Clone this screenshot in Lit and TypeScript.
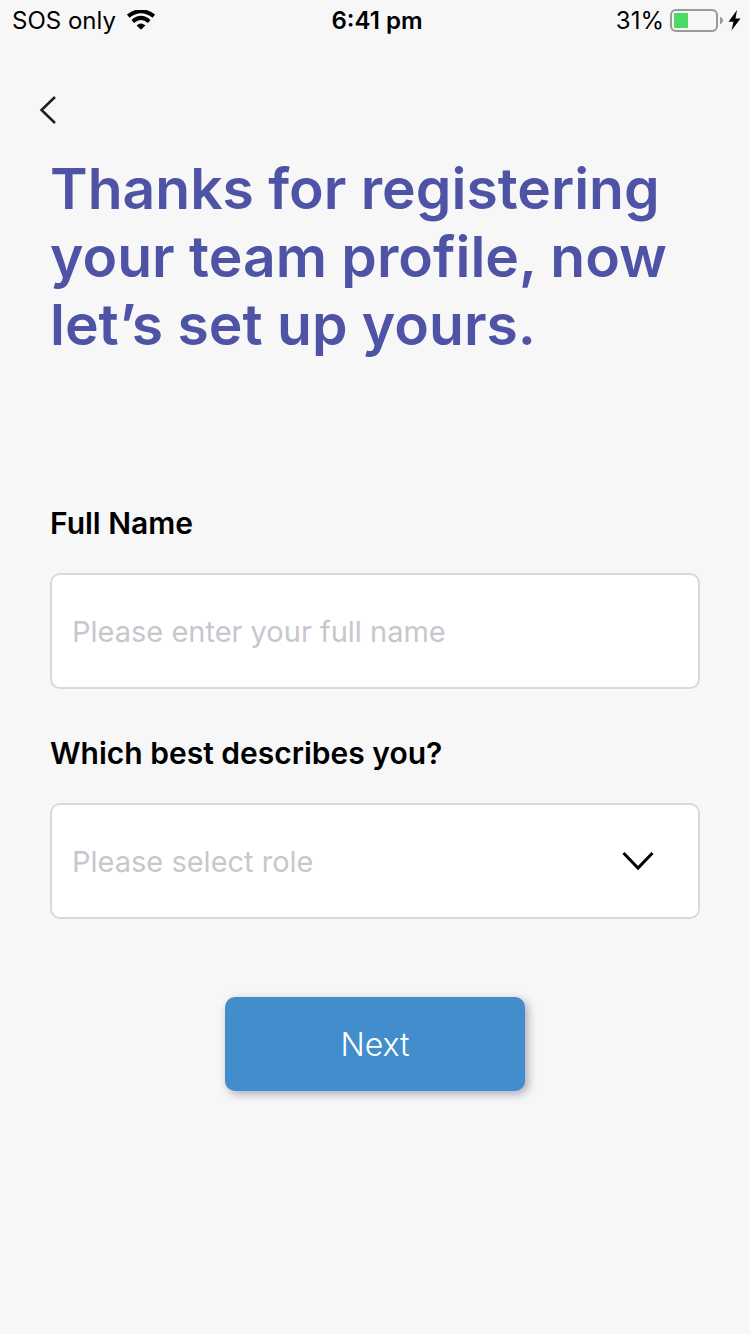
import { LitElement, html, css } from "lit";
import { customElement } from "lit/decorators.js";

@customElement("app-root")
export class AppRoot extends LitElement {
  static styles = css`
    :host {
      display: block;
      min-height: 100vh;
      background: #f7f7f7;
      color: #000;
      font-family: Inter, "Liberation Sans", sans-serif;
    }
    * {
      box-sizing: border-box;
    }
    .status {
      display: grid;
      grid-template-columns: 1fr auto 1fr;
      align-items: center;
      height: 42px;
      padding: 0 8px 0 12px;
      font-size: 24px;
      line-height: 42px;
    }
    .carrier,
    .power {
      display: flex;
      align-items: center;
    }
    .carrier {
      gap: 10px;
    }
    .power {
      justify-content: flex-end;
      gap: 6px;
    }
    .time {
      font-weight: 600;
    }
    svg {
      display: block;
    }
    .back {
      display: block;
      margin: 46px 0 0 32px;
      padding: 6px;
      border: 0;
      background: none;
    }
    main {
      padding: 23px 50px 0;
    }
    h1 {
      margin: 0;
      color: #4e53a6;
      font-size: 57px;
      font-weight: 600;
      line-height: 68px;
    }
    form {
      display: flex;
      flex-direction: column;
      margin-top: 144px;
    }
    label {
      font-size: 30px;
      font-weight: 600;
      line-height: 40px;
    }
    .box {
      display: grid;
      align-items: center;
      height: 116px;
      margin: 30px 0 44px;
      border: 2px solid #d9d9d9;
      border-radius: 10px;
      background: #fff;
    }
    .control {
      grid-area: 1 / 1;
      width: 100%;
      height: 100%;
      padding: 0 20px;
      border: 0;
      background: none;
      color: #c7c7cd;
      font: inherit;
      font-size: 29px;
      appearance: none;
    }
    .control::placeholder {
      color: #c7c7cd;
      opacity: 1;
    }
    .chevron {
      grid-area: 1 / 1;
      justify-self: end;
      margin-right: 44px;
      pointer-events: none;
    }
    .next {
      align-self: center;
      width: 300px;
      height: 94px;
      margin-top: 34px;
      border: 0;
      border-radius: 10px;
      background: #428dcc;
      box-shadow: 3px 3px 10px rgba(60, 50, 90, 0.4);
      color: #fff;
      font: inherit;
      font-size: 32px;
      font-weight: 300;
    }
  `;

  render() {
    return html`
      <div class="status">
        <div class="carrier">
          <span>SOS only</span>
          <svg width="30" height="22" viewBox="0 0 30 22" aria-hidden="true">
            <g fill="none" stroke="#000" stroke-width="4">
              <path d="M2.200 6.200Q15 -3.800 27.800 6.200" />
              <path d="M6.800 11.400Q15 4.400 23.200 11.400" />
            </g>
            <path d="M10.600 15.400Q15 11.800 19.400 15.400L15 19.800Z" />
          </svg>
        </div>
        <span class="time">6:41 pm</span>
        <div class="power">
          <span>31%</span>
          <svg width="72" height="24" viewBox="0 0 72 24" aria-hidden="true">
            <rect x="1" y="1" width="46" height="21" rx="5" fill="none" stroke="#999" stroke-width="2" />
            <rect x="4" y="4" width="14" height="15" rx="1" fill="#4cd964" />
            <path d="M50 7.500Q56 11.500 50 15.500Z" fill="#999" />
            <path d="M67 1L58.500 12.800H63.500L61.500 21.500L70.500 9.500H65.500Z" />
          </svg>
        </div>
      </div>
      <button class="back" aria-label="Back">
        <svg width="20" height="32" viewBox="0 0 20 32" fill="none" stroke="#1c1c28" stroke-width="2.500">
          <path d="M17 3L3.500 16L17 29" />
        </svg>
      </button>
      <main>
        <h1>Thanks for registering your team profile, now let’s set up yours.</h1>
        <form @submit=${(e: Event) => e.preventDefault()}>
          <label for="name">Full Name</label>
          <div class="box">
            <input class="control" id="name" type="text" placeholder="Please enter your full name" />
          </div>
          <label for="role">Which best describes you?</label>
          <div class="box">
            <select class="control" id="role">
              <option value="">Please select role</option>
            </select>
            <svg class="chevron" width="32" height="20" viewBox="0 0 32 20" fill="none" stroke="#000" stroke-width="3" aria-hidden="true">
              <path d="M1.500 2L16 17L30.500 2" />
            </svg>
          </div>
          <button class="next" type="submit">Next</button>
        </form>
      </main>
    `;
  }
}
